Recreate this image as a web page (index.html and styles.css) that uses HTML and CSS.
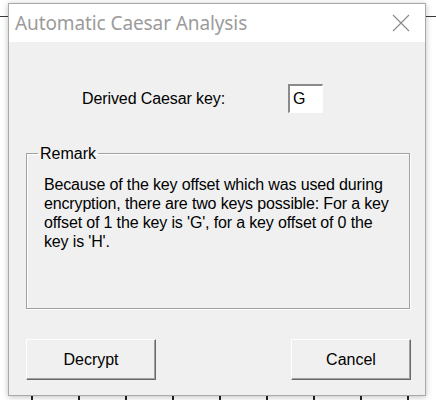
FILE: index.html
```html
<!DOCTYPE html>
<html>
<head>
<meta charset="utf-8">
<link rel="stylesheet" href="styles.css">
</head>
<body>
<div class="window">
  <div class="titlebar">
    <span class="title">Automatic Caesar Analysis</span>
    <svg class="close" width="18" height="18" viewBox="0 0 18 18"><path d="M1 1 L17 17 M17 1 L1 17" stroke="#8a8a8a" stroke-width="1.1" fill="none"/></svg>
  </div>
  <div class="content">
    <div class="keyrow">
      <span class="label">Derived Caesar key:</span>
      <div class="keybox">G</div>
    </div>
    <fieldset class="group">
      <legend>Remark</legend>
      <p>Because of the key offset which was used during encryption, there are two keys possible: For a key offset of 1 the key is 'G', for a key offset of 0 the key is 'H'.</p>
    </fieldset>
    <div class="buttons">
      <button class="btn decrypt">Decrypt</button>
      <button class="btn cancel">Cancel</button>
    </div>
  </div>
</div>
</body>
</html>
```
FILE: styles.css
```css
html, body {
  margin: 0;
  padding: 0;
}
body {
  width: 436px;
  height: 400px;
  overflow: hidden;
  background:
    linear-gradient(#3a3a3a, #3a3a3a) 0 16px / 100% 1px no-repeat,
    repeating-linear-gradient(90deg, transparent 0, transparent 31px, #222 31px, #222 33px, transparent 33px, transparent 47px) 0 396px / 100% 4px no-repeat,
    #ffffff;
  font-family: "Liberation Sans", Arial, sans-serif;
}
.window {
  margin: 3px 0 0 8px;
  width: 416px;
  height: 391px;
  border: 1px solid #a9a9a9;
  box-shadow: 0 1px 6px rgba(0,0,0,0.25);
  background: #f0f0f0;
  display: flex;
  flex-direction: column;
}
.titlebar {
  height: 38px;
  background: #ffffff;
  display: flex;
  align-items: center;
  justify-content: space-between;
  padding: 0 15px 0 6px;
}
.title {
  font-family: "Noto Sans", "Open Sans", sans-serif;
  font-size: 19px;
  color: #9b9b9b;
  letter-spacing: -0.1px;
  margin-top: -1px;
}
.close {
  display: block;
}
.content {
  flex: 1;
  padding: 42px 0 0 17px;
  font-size: 16px;
  color: #000;
}
.keyrow {
  display: flex;
  align-items: center;
  padding-left: 56px;
  height: 29px;
}
.label {
  width: 206px;
  letter-spacing: -0.1px;
}
.keybox {
  box-sizing: border-box;
  width: 35px;
  height: 29px;
  background: #fff;
  border-style: solid;
  border-width: 2px 1px 1px 2px;
  border-color: #8a8a8a #ffffff #ffffff #8a8a8a;
  padding: 3px 0 0 3px;
  line-height: 20px;
}
.group {
  box-sizing: border-box;
  width: 384px;
  height: 165px;
  margin: 31px 0 0 0;
  padding: 12px 13px 0 17px;
  border: 1px solid #a0a0a0;
  box-shadow: 1px 1px 0 #fff, inset 1px 1px 0 #fff;
  min-width: 0;
}
.group legend {
  padding: 0 2px;
  margin-left: -6px;
  line-height: 19px;
}
.group p {
  margin: 0;
  line-height: 19px;
  letter-spacing: -0.15px;
}
.buttons {
  display: flex;
  justify-content: space-between;
  width: 385px;
  margin-top: 30px;
}
.btn {
  box-sizing: border-box;
  height: 41px;
  font-family: "Liberation Sans", Arial, sans-serif;
  font-size: 16px;
  color: #000;
  background: #f0f0f0;
  border: 1px solid;
  border-color: #ffffff #6a6a6a #6a6a6a #ffffff;
  box-shadow: inset -1px -1px 0 #a0a0a0;
  padding: 0;
}
.decrypt { width: 130px; }
.cancel { width: 120px; }
```
